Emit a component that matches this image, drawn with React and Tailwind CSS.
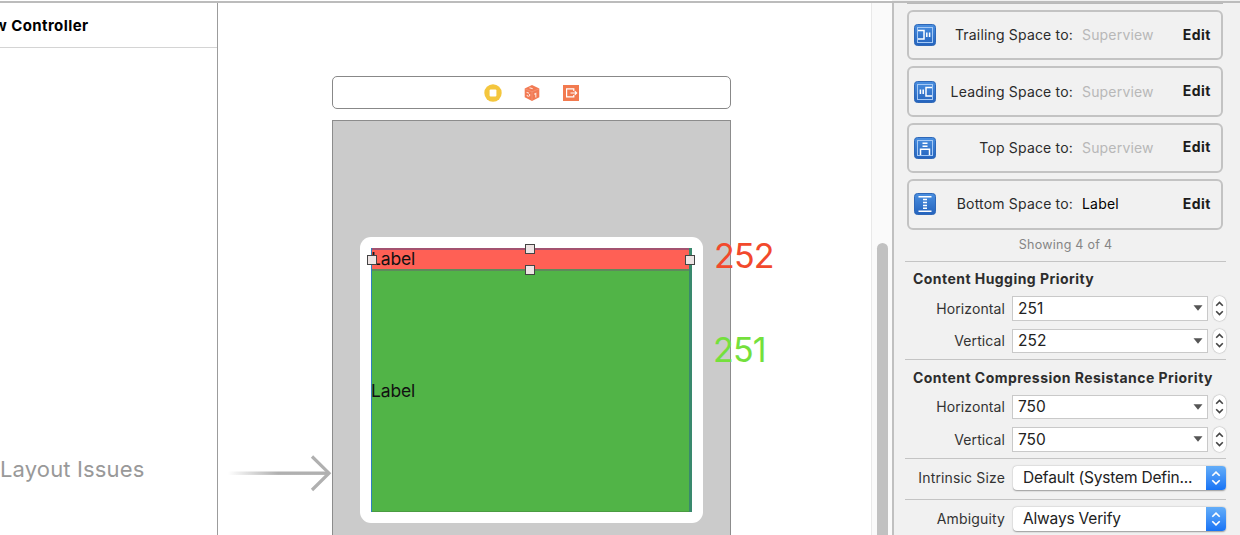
import React, { useState } from 'react';

const constraints = [
  { kind: 'trailing', label: 'Trailing Space to:', target: 'Superview' },
  { kind: 'leading', label: 'Leading Space to:', target: 'Superview' },
  { kind: 'top', label: 'Top Space to:', target: 'Superview' },
  { kind: 'bottom', label: 'Bottom Space to:', target: 'Label', linked: true },
];

function ConstraintIcon({ kind }) {
  return (
    <svg width="22" height="22" viewBox="0 0 22 22" className="shrink-0">
      <defs>
        <linearGradient id={`blue-${kind}`} x1="0" y1="0" x2="0" y2="1">
          <stop offset="0" stopColor="#4a8fe0" />
          <stop offset="1" stopColor="#2463bd" />
        </linearGradient>
      </defs>
      <rect x="0.5" y="0.5" width="21" height="21" rx="3" fill={`url(#blue-${kind})`} stroke="#2f68b8" />
      {kind !== 'bottom' && (
        <rect x="3.5" y="3.5" width="15" height="15" fill="none" stroke="#a5c9f5" strokeWidth="1" />
      )}
      <g fill="none" stroke="#fff" strokeWidth="1.5">
        {kind === 'trailing' && (
          <>
            <path d="M4 6.5H10V15H4" />
            <path d="M12.8 8.5v4.5M15.6 8.5v4.5" />
          </>
        )}
        {kind === 'leading' && (
          <>
            <path d="M18 6.5H12V15H18" />
            <path d="M6.4 8.5v4.5M9.2 8.5v4.5" />
          </>
        )}
        {kind === 'top' && (
          <>
            <path d="M6.5 18V12.2H15.5V18" />
            <path d="M8.5 6.3h5M8.5 9.2h5" />
          </>
        )}
        {kind === 'bottom' && (
          <>
            <path d="M4.5 3.7H17.5M4.5 18.3H17.5" />
            <path d="M9 6.6h4M9 9.4h4M9 12.4h4M9 15.3h4" />
          </>
        )}
      </g>
    </svg>
  );
}

function ConstraintRow({ kind, label, target, linked }) {
  return (
    <div className="flex h-[50.4px] shrink-0 items-center rounded-[6px] border-2 border-[#c3c3c3] pl-[5px] pr-[10px] text-[14px] tracking-[0.18px]">
      <ConstraintIcon kind={kind} />
      <span className="w-[137px] pb-px text-right text-[#2b2b2b]">{label}</span>
      <span className={`ml-[9px] flex-1 pb-px ${linked ? 'text-black' : 'text-[#b8b8b8]'}`}>{target}</span>
      <button className="pb-[2px] font-bold tracking-[0.5px] text-[#1c1c1c]">Edit</button>
    </div>
  );
}

function PriorityField({ label, initial }) {
  const [value, setValue] = useState(initial);

  return (
    <div className="flex h-[24.5px] items-center">
      <span className="mr-[7px] w-[98px] text-right text-[14px] tracking-[0.1px] text-[#333]">{label}</span>
      <div className="flex h-full w-[196px] items-center justify-between border border-[#c9c9c9] bg-white pl-[5px] pr-1">
        <span className="text-[15.5px] text-[#222]">{value}</span>
        <svg width="10" height="6" viewBox="0 0 10 6">
          <path d="M0.5 0.3h9L5 5.8z" fill="#555" />
        </svg>
      </div>
      <div className="ml-[5px] flex h-full w-[13px] flex-col items-center justify-around rounded-full bg-white py-[3px] shadow-[0_0_1px_0.5px_#c2c2c2]">
        <button onClick={() => setValue(value + 1)}>
          <svg width="9" height="6" viewBox="0 0 9 6" className="block">
            <path d="M1.2 4.8L4.5 1.5l3.3 3.3" fill="none" stroke="#444" strokeWidth="1.6" />
          </svg>
        </button>
        <button onClick={() => setValue(value - 1)}>
          <svg width="9" height="6" viewBox="0 0 9 6" className="block">
            <path d="M1.2 1.2l3.3 3.3 3.3-3.3" fill="none" stroke="#444" strokeWidth="1.6" />
          </svg>
        </button>
      </div>
    </div>
  );
}

function PopupField({ label, value }) {
  return (
    <div className="flex h-[24px] items-center">
      <span className="mr-[8px] w-[98px] shrink-0 text-right text-[14px] tracking-[0.15px] text-[#333]">{label}</span>
      <div className="flex h-full w-[213px] shrink-0 items-center overflow-hidden rounded-[4px] bg-white shadow-[0_0.5px_1.5px_#999]">
        <span className="flex-1 whitespace-nowrap pl-[10px] text-[15.5px] tracking-[-0.18px] text-[#222]">{value}</span>
        <div className="flex h-full w-[20px] items-center justify-center bg-gradient-to-b from-[#63adf8] to-[#1673f5]">
          <svg width="10" height="16" viewBox="0 0 10 16">
            <path d="M1.3 5.8L5 2.1l3.7 3.7M1.3 10.2L5 13.9l3.7-3.7" fill="none" stroke="#fff" strokeWidth="1.6" />
          </svg>
        </div>
      </div>
    </div>
  );
}

function Handle({ className }) {
  return <div className={`absolute size-[10px] border-[1.5px] border-[#444] bg-[#eee4e4] ${className}`} />;
}

function Dock() {
  return (
    <div className="flex h-[33px] items-center justify-center gap-[21px] rounded-[5px] border border-[#888] bg-white">
      <svg width="18" height="18" viewBox="0 0 18 18">
        <circle cx="9" cy="9" r="8.7" fill="#f4c63d" />
        <rect x="5.6" y="5.6" width="6.8" height="6.8" rx="1" fill="#fff" />
      </svg>
      <svg width="18" height="18" viewBox="0 0 18 18">
        <path d="M9 1l7.3 3.4v8.8L9 17l-7.3-3.8V4.4z" fill="#f27a53" />
        <path d="M2 4.8l7 3 7-3M9 7.8v9" fill="none" stroke="#f69a7c" strokeWidth="0.7" />
        <path d="M3.6 8.2l2.4 1M6.6 10v2.2M3.8 11.2l1.8 1.4M11.2 10.2l1.6-.8v4M6.5 3.8l3.2 1" fill="none" stroke="#fde3d9" strokeWidth="1.1" />
      </svg>
      <svg width="18" height="18" viewBox="0 0 18 18">
        <rect x="1" y="1" width="16" height="16" fill="#f27a4f" />
        <path d="M11.8 7V4.8H4.6v8h7.2V11" fill="none" stroke="#fff" strokeWidth="1.2" />
        <path d="M8.5 9h6M12.8 7.2L14.7 9l-1.9 1.8" fill="none" stroke="#fff" strokeWidth="1.1" />
      </svg>
    </div>
  );
}

function Canvas() {
  return (
    <main className="relative w-[653px] shrink-0 overflow-hidden bg-white pl-[114px] pt-[73px]">
      <div className="w-[399px]">
        <Dock />
        <div className="mt-[11px] h-[440px] border border-[#8c8c8c] bg-[#cbcbcb] px-[27px] pt-[116px]">
          <div className="h-[286px] rounded-[11px] bg-white p-[11px]">
            {/* Stacked labels with the top one selected */}
            <div className="relative flex h-full flex-col border-l border-l-[#2f7fc0] border-r-[3px] border-r-[#39896d] text-[17.5px] tracking-[-0.15px] text-[#111]">
              <div className="flex h-[23px] items-center border-y-2 border-t-[#a35270] border-b-[#5d8a5c] bg-[#ff6055]">
                <span className="-ml-px">Label</span>
              </div>
              <div className="flex flex-1 items-center border-b border-[#4a9c42] bg-[#51b447]">
                <span className="-ml-px">Label</span>
              </div>
              <Handle className="-top-[4px] left-[153px]" />
              <Handle className="left-[153px] top-[17px]" />
              <Handle className="-left-[5px] top-[7px]" />
              <Handle className="-right-[6px] top-[7px]" />
            </div>
          </div>
        </div>
      </div>

      {/* Entry point arrow */}
      <svg width="104" height="40" viewBox="0 0 104 40" className="absolute left-[10px] top-[450px]">
        <defs>
          <linearGradient id="tail" x1="0" x2="1" y1="0" y2="0">
            <stop offset="0" stopColor="#b0b0b0" stopOpacity="0" />
            <stop offset="0.5" stopColor="#b0b0b0" />
          </linearGradient>
        </defs>
        <rect x="0" y="18.5" width="100" height="3.4" fill="url(#tail)" />
        <path d="M84 3.5L101 20.2L84 37" fill="none" stroke="#b0b0b0" strokeWidth="3.2" />
      </svg>

      <span className="absolute left-[496px] top-[233px] text-[34px] leading-[40px] tracking-[-0.8px] text-[#f2492c]">252</span>
      <span className="absolute left-[495px] top-[327px] text-[34px] leading-[40px] tracking-[-0.8px] text-[#74e03c]">251</span>
    </main>
  );
}

function Inspector() {
  return (
    <aside className="flex-1 overflow-hidden border-l-2 border-[#c0c0c0] bg-[#f1f1f1] pl-[11px]">
      <div className="flex w-[321px] flex-col">
        <div className="ml-[2px] mr-[3px] flex flex-col gap-[6px]">
          <div className="h-[1px] bg-[#b9b9b9]" />
          {constraints.map((c) => (
            <ConstraintRow key={c.kind} {...c} />
          ))}
        </div>
        <p className="mt-[6px] text-center text-[12.5px] leading-[18px] tracking-[0.26px] text-[#858585]">Showing 4 of 4</p>

        <section className="mt-[7px] border-t border-[#c4c4c4] pl-[2px] pt-[7.5px]">
          <h2 className="mb-[7px] pl-[6px] text-[14px] font-bold leading-[20px] tracking-[0.45px] text-[#2d2d2d]">Content Hugging Priority</h2>
          <div className="flex flex-col gap-[8px]">
            <PriorityField label="Horizontal" initial={251} />
            <PriorityField label="Vertical" initial={252} />
          </div>
        </section>

        <section className="mt-[5.5px] border-t border-[#c4c4c4] pl-[2px] pt-[8px]">
          <h2 className="mb-[7px] whitespace-nowrap pl-[6px] text-[14px] font-bold leading-[20px] tracking-[0.46px] text-[#2d2d2d]">
            Content Compression Resistance Priority
          </h2>
          <div className="flex flex-col gap-[8px]">
            <PriorityField label="Horizontal" initial={750} />
            <PriorityField label="Vertical" initial={750} />
          </div>
        </section>

        <section className="mt-[6px] border-t border-[#c4c4c4] pl-[2px] pt-[7px]">
          <PopupField label="Intrinsic Size" value="Default (System Defin..." />
        </section>
        <section className="mt-[9px] border-t border-[#c4c4c4] pl-[2px] pt-[7px]">
          <PopupField label="Ambiguity" value="Always Verify" />
        </section>
      </div>
    </aside>
  );
}

export default function App() {
  return (
    <div className="flex h-[535px] w-[1240px] flex-col overflow-hidden bg-white font-['Inter','Liberation_Sans',sans-serif]">
      <div className="flex h-[3px] shrink-0 justify-end border-b-2 border-[#bcbcbc] bg-white">
        <div className="w-[348px] bg-[#f1f1f1]" />
      </div>
      <div className="flex min-h-0 flex-1">
        <nav className="flex w-[218px] shrink-0 flex-col overflow-hidden border-r border-[#9c9c9c]">
          <div className="flex h-[45px] shrink-0 items-center border-b border-[#d4d4d4]">
            <span className="-ml-[6px] whitespace-nowrap pt-[3px] text-[15px] font-bold tracking-[0.42px] text-black">w Controller</span>
          </div>
          <p className="mt-[406px] whitespace-nowrap text-[22px] leading-[30px] tracking-[0.15px] text-[#999]">Layout Issues</p>
        </nav>
        <Canvas />
        <div className="flex w-[21px] shrink-0 justify-center border-l border-[#e9e9e9] bg-[#fafafa] pt-[240px]">
          <div className="h-[330px] w-[11px] rounded-full bg-[#c1c1c1]" />
        </div>
        <Inspector />
      </div>
    </div>
  );
}
